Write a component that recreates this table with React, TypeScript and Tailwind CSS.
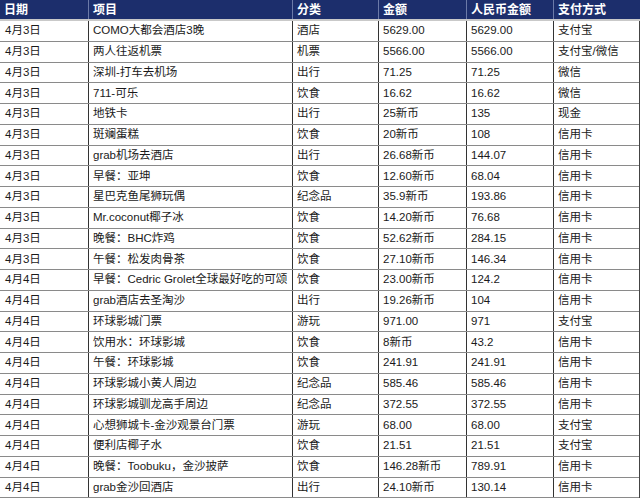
const ROWS: string[][] = [
  ['4月3日', 'COMO大都会酒店3晚', '酒店', '5629.00', '5629.00', '支付宝'],
  ['4月3日', '两人往返机票', '机票', '5566.00', '5566.00', '支付宝/微信'],
  ['4月3日', '深圳-打车去机场', '出行', '71.25', '71.25', '微信'],
  ['4月3日', '711-可乐', '饮食', '16.62', '16.62', '微信'],
  ['4月3日', '地铁卡', '出行', '25新币', '135', '现金'],
  ['4月3日', '斑斓蛋糕', '饮食', '20新币', '108', '信用卡'],
  ['4月3日', 'grab机场去酒店', '出行', '26.68新币', '144.07', '信用卡'],
  ['4月3日', '早餐：亚坤', '饮食', '12.60新币', '68.04', '信用卡'],
  ['4月3日', '星巴克鱼尾狮玩偶', '纪念品', '35.9新币', '193.86', '信用卡'],
  ['4月3日', 'Mr.coconut椰子冰', '饮食', '14.20新币', '76.68', '信用卡'],
  ['4月3日', '晚餐：BHC炸鸡', '饮食', '52.62新币', '284.15', '信用卡'],
  ['4月3日', '午餐：松发肉骨茶', '饮食', '27.10新币', '146.34', '信用卡'],
  ['4月4日', '早餐：Cedric Grolet全球最好吃的可颂', '饮食', '23.00新币', '124.2', '信用卡'],
  ['4月4日', 'grab酒店去圣淘沙', '出行', '19.26新币', '104', '信用卡'],
  ['4月4日', '环球影城门票', '游玩', '971.00', '971', '支付宝'],
  ['4月4日', '饮用水：环球影城', '饮食', '8新币', '43.2', '信用卡'],
  ['4月4日', '午餐：环球影城', '饮食', '241.91', '241.91', '信用卡'],
  ['4月4日', '环球影城小黄人周边', '纪念品', '585.46', '585.46', '信用卡'],
  ['4月4日', '环球影城驯龙高手周边', '纪念品', '372.55', '372.55', '信用卡'],
  ['4月4日', '心想狮城卡-金沙观景台门票', '游玩', '68.00', '68.00', '支付宝'],
  ['4月4日', '便利店椰子水', '饮食', '21.51', '21.51', '支付宝'],
  ['4月4日', '晚餐：Toobuku，金沙披萨', '饮食', '146.28新币', '789.91', '信用卡'],
  ['4月4日', 'grab金沙回酒店', '出行', '24.10新币', '130.14', '信用卡'],
]

const HEADERS = ['日期', '项目', '分类', '金额', '人民币金额', '支付方式']

const GRID = 'grid grid-cols-[88px_204px_86px_88px_87px_1fr]'

export default function App() {
  return (
    <div
      className="w-[640px] h-[500px] overflow-hidden bg-white text-[11.5px] text-[#1a1a1a]"
      style={{ fontFamily: '"Liberation Sans", "Noto Sans CJK SC", sans-serif' }}
    >
      {/* Header */}
      <div className={`${GRID} h-[19px] bg-[#1c2e6c] text-white font-bold text-[12px]`}>
        {HEADERS.map((h, i) => (
          <div
            key={h}
            className={`flex items-center pl-[4px] ${i > 0 ? 'border-l border-[#6b7aa8]' : ''}`}
          >
            {h}
          </div>
        ))}
      </div>
      <div className="h-[2px] bg-[#c9c9c9]" />

      {/* Rows */}
      <div className="border-r border-[#444]">
        {ROWS.map((row, r) => (
          <div key={r} className={`${GRID} h-[20.75px] border-b border-[#8a8a8a]`}>
            {row.map((cell, i) => (
              <div
                key={i}
                className={`flex items-center whitespace-nowrap overflow-hidden pl-[4px] ${i > 0 ? 'border-l border-[#333]' : 'pl-[5px]'}`}
              >
                {cell}
              </div>
            ))}
          </div>
        ))}
      </div>
    </div>
  )
}
